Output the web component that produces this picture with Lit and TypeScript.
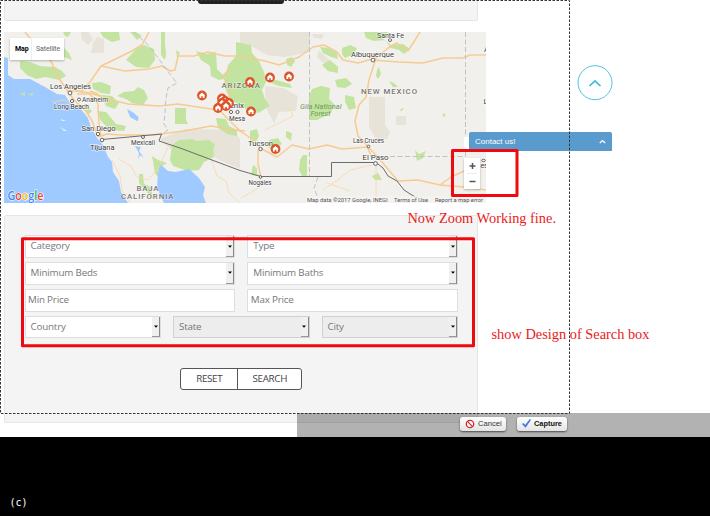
import { LitElement, html, svg, css } from "lit";
import { customElement, property } from "lit/decorators.js";

type Label = [text: string, x: number, y: number, width: number, kind: string];

const PARKS = [
  "M100 32H119L120 40 112 42 103 37Z",
  "M63 32H71L68 37 65 36Z M56 50L64 48 69 53 72 60 64 57Z",
  "M20 61L30 62 40 66 55 67 62 71 66 76 59 80 45 77 36 79 27 75 20 68Z",
  "M126 60L136 49 144 45 154 49 155 60 149 68 136 67Z",
  "M161 32H165V44L166 54 165 60 161 55Z",
  "M92 83L101 82 111 86 110 94 101 93 93 89Z M101 95L112 96 119 103 115 109 106 106Z",
  "M117 96L124 92 134 91 138 87 144 90 148 98 143 105 132 103 126 99Z",
  "M97 111L106 112 112 119 116 124 126 126 124 131 110 130 101 121Z",
  "M175 108H186V120L188 124H175Z",
  "M196 51L207 54 216 52 217 69 223 75 228 71 228 78 219 80 211 76 210 66 201 60Z",
  "M236 42L251 45 252 53 259 61 264 72 266 82 262 90 265 99 270 106 258 113 243 108 229 98 224 85 228 65 236 56Z",
  "M264 76L276 80 290 84 292 88 279 86 264 80Z",
  "M286 59L292 57 295 61 291 67 287 65Z",
  "M320 47L328 48 337 53 338 59 331 57 323 53Z M342 48L350 45 357 48 354 54 345 58 342 54Z M322 65L330 60 338 67 338 73 328 71Z",
  "M364 32H389L382 38 391 45 403 44 410 49 404 54 399 50 391 48 385 40 374 41 366 38Z",
  "M312 89L321 86 330 88 329 99 335 105 330 114 317 120 309 120 309 96Z M335 80L346 78 352 84 345 88 337 87Z M345 95L354 97 356 108 349 110 345 102Z M377 70L379 67 381 74 378 79 376 76Z",
  "M389 81L394 83 398 87 393 87Z M399 110L404 108 402 111Z M442 115L445 113 445 117Z",
  "M172 145L179 140 191 139 197 141 210 140 213 145 214 157 204 162 199 170 188 171 173 166 170 160Z",
  "M152 156L158 160 167 163 162 166 158 171 160 180 155 173Z M139 174L143 174 144 184 151 187 153 199 148 193 139 183Z",
  "M216 118L226 119 229 126 237 130 237 136 227 134 218 128Z M209 141L215 144 213 150 208 147Z",
  "M303 155H307V176H302L299 170 300 160Z M250 131L257 129 259 136 255 144 250 142Z M269 140L278 138 282 144 273 150 268 147Z M286 131L292 133 291 141 286 137Z M253 165L257 168 257 176 251 175Z",
  "M372 176L378 173 382 180 375 180Z M415 150L419 154 426 151 423 158 417 161Z M176 50L180 53 177 57Z",
  "M130 32H136L142 36 137 40Z M80 106L87 107 92 111 89 114Z",
];

const DESERT = [
  "M81 32H89L93 40 88 45 82 40Z M97 37L104 39 104 53H91L93 43Z",
  "M240 32H310V52L285 57 267 55 253 47 240 44Z",
  "M265 86L283 88 298 96 296 111 279 112 274 123 266 108Z",
  "M369 97H385V125L390 132 387 139H376L369 127Z M396 116H406V125H396Z",
  "M162 138L185 129 233 130 240 139 240 169 215 158 203 142 178 143 172 150 161 141Z",
  "M312 34H324L322 39 314 38Z M319 50L330 61 336 70 326 65 317 57Z",
];

const ROADS = [
  "M25 32L30 38 38 44 45 53 52 63 56 74 67 90 74 100 86 111 92 121 98 137",
  "M68 91L82 91 90 82 101 66 130 52 142 45 149 32",
  "M101 66L125 71 149 69 162 66 170 71 175 70 178 56 194 56 208 52 225 56 240 56 265 61 279 65 299 57 313 47 324 45 337 52 343 60 358 63 376 58 388 48 397 43 408 51 420 32",
  "M67 90L90 93 108 99 128 104 160 106 178 104 211 109 220 111 230 121 240 131 252 139 260 148 277 157 292 145 309 149 327 145 342 149 368 147 377 156 398 181 418 180 440 185 464 187 486 190",
  "M98 137L107 134 121 135 153 135 184 131 211 126 235 130 245 131",
  "M77 94L90 94 98 104 99 124 101 136",
  "M90 91L98 94 110 104",
  "M376 58L369 80 366 97 359 105 355 121 358 136 366 144 372 158",
  "M373 60L398 62 423 63 443 58 463 58 470 55 486 55",
  "M258 150L258 164 261 177",
  "M440 185L451 177 464 171 486 165",
  "M230 68L223 76 230 91 229 107",
];

const MINOR_ROADS = [
  "M211 159L217 176 226 181 229 193 240 203", "M261 177L257 189 241 198",
  "M372 165L350 170 339 179 323 190", "M376 165L376 203", "M119 159L131 166 137 177 148 180 160 166 168 147",
  "M112 160L120 176 122 190 130 203", "M265 130L293 116 289 107", "M327 183L350 191", "M52 102L65 100 74 108",
];

const MARKERS: [number, number][] = [
  [202, 95.5], [250, 82], [270, 77.5], [289, 76.5], [251, 111.5], [275.5, 149],
  [222, 98.5], [225, 101], [229, 103], [222, 103], [218, 108], [226, 106],
];

const TOWNS: [number, number, number][] = [
  [70, 93, 1.9], [72, 101, 1.6], [79, 99.5, 1.5], [98, 134, 1.7], [102, 140, 1.8], [143, 137, 1.5],
  [231, 112, 1.6], [237.5, 112, 1.6], [260.5, 149, 1.7], [260.5, 177, 1.3], [390, 40, 1.5],
  [373, 60, 1.9], [368.5, 146.5, 1.3], [375.5, 163.5, 1.9],
];

const LABELS: Label[] = [
  ["Los Angeles", 50, 89, 41, "city"],
  ["Anaheim", 82, 102, 26, "town"],
  ["Long Beach", 54, 109, 35, "town"],
  ["San Diego", 81.5, 131, 34, "town"],
  ["Tijuana", 90, 149.5, 24.5, "city"],
  ["Mexicali", 131, 145, 24, "small"],
  ["Phoenix", 216, 108, 28, "town"],
  ["Mesa", 229, 121, 16, "town"],
  ["Tucson", 248, 145.5, 25, "city"],
  ["Nogales", 248.5, 185, 23, "small"],
  ["Santa Fe", 377, 37.5, 27, "town"],
  ["Albuquerque", 351, 56.5, 43, "city"],
  ["Las Cruces", 353, 143, 31, "small"],
  ["El Paso", 362.5, 159.5, 26, "city"],
  ["ARIZONA", 221.5, 88, 38.5, "region"],
  ["NEW MEXICO", 361, 94, 56, "region"],
  ["BAJA", 136.5, 190.5, 22, "region"],
  ["CALIFORNIA", 121, 198.5, 52.5, "region"],
  ["Gila National", 300, 109, 41.5, "forest"],
  ["Forest", 310.5, 116, 20, "forest"],
];

@customElement("region-map")
class RegionMap extends LitElement {
  static styles = css`
    :host { display: block; position: relative; width: 482px; height: 171px; font-family: Roboto, sans-serif; }
    .canvas { display: block; width: 482px; height: 171px; }
    .land { fill: #f2f0ec; }
    .sea { fill: #9fcaff; }
    .park { fill: #c3e4a0; }
    .desert { fill: #e2ddd2; opacity: .7; }
    .road { fill: none; stroke: #f6cb92; stroke-width: 1.5; stroke-linejoin: round; }
    .minor { fill: none; stroke: #f6d7aa; stroke-width: .8; }
    .border { fill: none; stroke: #6c6c6c; stroke-width: 1; }
    .state { fill: none; stroke: #c2c2c2; stroke-width: 1; stroke-dasharray: 5 2.5; }
    .place { fill: #fff; stroke: #555; stroke-width: .9; }
    .city, .town, .small { fill: #3c3c3c; stroke: #fff; stroke-width: 1.4; stroke-opacity: .7; paint-order: stroke; }
    .city { font-size: 8px; }
    .town { font-size: 7.4px; }
    .small { font-size: 6.7px; }
    .region { font-size: 7.8px; fill: #777; font-weight: 500; stroke: #fff; stroke-width: 1; stroke-opacity: .6; paint-order: stroke; }
    .forest { font-size: 7.2px; fill: #6d9b58; font-style: italic; }
    .legal-band { fill: #f5f5f5; opacity: .65; }
    .legal { font-size: 6.2px; fill: #555; }
    .pin { fill: #dc5529; }
    .house { fill: #fff; }
    .logo { font-family: "Open Sans", sans-serif; font-size: 11.800px; font-weight: 600; stroke: #fff; stroke-width: 1.2; paint-order: stroke; }
    .blue { fill: #4285f4; } .red { fill: #ea4335; } .yellow { fill: #fbbc05; } .green { fill: #34a853; }
    .types { position: absolute; left: 6px; top: 6px; display: flex; height: 22px; width: 54px; background: #fff; box-shadow: 0 1px 2px #0004; font-size: 7px; letter-spacing: -.1px; line-height: 22px; }
    .type { padding-left: 4px; color: #666; }
    .type.on { box-sizing: border-box; width: 22px; color: #000; font-weight: 700; border-right: 1px solid #eee; padding-left: 5px; }
    .zoom { position: absolute; left: 460px; top: 126px; width: 16px; height: 31px; background: #fff; box-shadow: 0 1px 2px #0004; }
    .zoom svg { display: block; }
    .pegman { position: absolute; left: 460px; top: 105px; width: 16px; height: 13px; background: #fff; }
  `;

  render() {
    return html`
      <svg class="canvas" viewBox="4 32 482 171">
        <rect class="land" x="4" y="32" width="482" height="171"/>
        ${DESERT.map((d) => svg`<path class="desert" d=${d}/>`)}
        ${PARKS.map((d) => svg`<path class="park" d=${d}/>`)}
        <path class="sea" d="M4 57L8 58 8 75 14 79 30 79 45 87 57 94 65 95 70 103 80 108 88 118 91 127 97 138 103 145 108 157 112 162 113 172 119 181 121 192 128 203H4Z"/>
        <path class="sea" d="M160 164L168 171 176 172 189 169 199 178 205 187 203 195 206 203H164L157 188 158 173Z"/>
        <path class="sea" d="M127 109L134 113 139 118 137 121 130 117ZM133 115L138 116 138 121 134 118ZM135 146L141 147 139 151 144 158 140 155 138 160 139 153Z"/>
        <path class="park" d="M20 94L25 92 25 96ZM28 94L34 93 32 96Z"/>
        <path class="land" d="M60 127L67 131 64 131ZM61 119L66 121 62 121Z"/>
        ${MINOR_ROADS.map((d) => svg`<path class="minor" d=${d}/>`)}
        ${ROADS.map((d) => svg`<path class="road" d=${d}/>`)}
        <path class="state" d="M134 32L149 46 161 62 169 73 177 83 168 88 166 98 165 112 164 124 168 130 161 135"/>
        <path class="state" d="M309.5 32V176M465.5 32V156.5H385M318 177L314 188 317 196"/>
        <path class="border" d="M102 139.500L161.500 134 159 141 180 148 240 170.500 261 176.500H331.500V162.500H376L383 168 388 176 397 181 404 190 415 197"/>
        ${TOWNS.map(([x, y, r]) => svg`<circle class="place" cx=${x} cy=${y} r=${r}/>`)}
        ${LABELS.map(([t, x, y, w, k]) => svg`<text class=${k} x=${x} y=${y} textLength=${w} lengthAdjust=${k === "region" ? "spacing" : "spacingAndGlyphs"}>${t}</text>`)}
        <ellipse class="place" cx="483.500" cy="160.500" rx="1.700" ry="1.200"/>
        <text class="small" x="480.500" y="168">es</text>
        <text class="town" x="483.500" y="104">L</text>
        <text class="town" x="484" y="52">A</text>
        ${MARKERS.map(([x, y]) => svg`
          <circle class="pin" cx=${x} cy=${y} r="4.900"/>
          <path class="house" transform="translate(${x} ${y})" d="M0-3L3-.2 2.500.500V2.600H.8V.8H-.8V2.600H-2.500V.5L-3-.2Z"/>`)}
        <rect class="legal-band" x="306" y="196" width="180" height="7"/>
        <text class="legal" x="307" y="202" textLength="80.500" lengthAdjust="spacingAndGlyphs">Map data ©2017 Google, INEGI</text>
        <text class="legal" x="394" y="202" textLength="34" lengthAdjust="spacingAndGlyphs">Terms of Use</text>
        <text class="legal" x="435" y="202" textLength="48" lengthAdjust="spacingAndGlyphs">Report a map error</text>
        <text class="logo" x="7.500" y="199.500" textLength="36" lengthAdjust="spacingAndGlyphs"><tspan class="blue">G</tspan><tspan class="red">o</tspan><tspan class="yellow">o</tspan><tspan class="blue">g</tspan><tspan class="green">l</tspan><tspan class="red">e</tspan></text>
      </svg>
      <div class="types"><span class="type on">Map</span><span class="type">Satellite</span></div>
      <div class="pegman"></div>
      <div class="zoom">
        <svg width="16" height="31" viewBox="0 0 16 31">
          <path d="M5.500 8H11.500M8.500 5V11M5.500 23.500H11.500" stroke="#555" stroke-width="1.500"/>
          <path d="M3 15.500H13" stroke="#e6e6e6" stroke-width=".8"/>
        </svg>
      </div>`;
  }
}

@customElement("select-field")
class SelectField extends LitElement {
  @property() label = "";
  @property({ type: Boolean, reflect: true }) disabled = false;
  @property({ type: Boolean, reflect: true }) plain = false;

  static styles = css`
    :host { display: flex; box-sizing: border-box; flex: 1; height: 22.8px; background: #fff; border: 1px solid #dedede; color: #777; font: 9.8px/20px "Open Sans", sans-serif; letter-spacing: -.18px; }
    :host([disabled]) { background: #ededed; border-color: #d0d0d0; }
    .label { flex: 1; padding-left: 5px; }
    :host([plain]) .label { padding-left: 2.500px; }
    .arrow { box-sizing: border-box; width: 8px; background: #f0f0f0; border-right: 1.500px solid #888; border-bottom: 1px solid #999; display: flex; align-items: center; justify-content: center; }
    .arrow svg { display: block; }
  `;

  render() {
    return html`<span class="label">${this.label}</span>
      ${this.plain ? "" : html`<span class="arrow"><svg width="4" height="3" viewBox="0 0 4 3"><path d="M0 .500H4L2 2.700Z" fill="#000"/></svg></span>`}`;
  }
}

@customElement("app-root")
class AppRoot extends LitElement {
  static styles = css`
    :host { display: flex; flex-direction: column; position: relative; width: 710px; height: 516px; overflow: hidden; background: #000; font-family: "Open Sans", sans-serif; }
    .page { height: 437px; background: #fff; display: flex; flex-direction: column; padding-left: 4px; box-sizing: border-box; }
    .panel { box-sizing: border-box; width: 474px; background: #f4f4f4; border: 1px solid #e6e6e6; border-radius: 2px; }
    .top { height: 21px; border-top: 0; margin-bottom: 11px; flex: none; }
    region-map { flex: none; margin-bottom: 12px; }
    .search { height: 208px; flex: none; padding: 19.300px 19px 0 19.500px; display: flex; flex-direction: column; }
    .rows { display: flex; flex-direction: column; gap: 4px; }
    .row { display: flex; gap: 12px; }
    .actions { display: flex; align-self: center; margin: 30px 0 0 0; box-sizing: border-box; width: 122px; height: 22px; border: 1px solid #555; border-radius: 3px; background: #fff; color: #444; font-size: 9.800px; letter-spacing: -.3px; line-height: 20.500px; text-align: center; }
    .reset { width: 56px; border-right: 1px solid #555; }
    .find { flex: 1; }
    .footer { flex: 1; display: flex; align-items: flex-end; padding: 0 0 5px 9.500px; box-sizing: border-box; color: #fff; }
    .mark { font: 10px/16px "DejaVu Sans Mono", monospace; }
    .tab { position: absolute; left: 198px; top: -4px; width: 86px; height: 8px; border-radius: 3px; background: #222; }
    .chat { position: absolute; left: 469px; top: 132px; width: 143px; height: 19px; box-sizing: border-box; padding: 0 6px; display: flex; align-items: center; justify-content: space-between; border-radius: 2px 2px 0 0; background: #5a9bce; color: #fff; font: 8px "Liberation Sans", sans-serif; }
    .up { position: absolute; left: 577px; top: 65px; }
    .shade { position: absolute; left: 297px; top: 413px; width: 413px; height: 24px; box-sizing: border-box; padding: 3.500px 0 0 163px; display: flex; gap: 11px; background: #0000004d; }
    .tool { box-sizing: border-box; width: 46px; height: 14px; display: flex; align-items: center; gap: 3px; padding-left: 5px; border-radius: 3px; background: linear-gradient(#fff, #e4e4e4); box-shadow: 0 1px 2px #0009; color: #333; font: 7.600px "Liberation Sans", sans-serif; white-space: nowrap; }
    .tool.primary { width: 50px; font-weight: 700; font-size: 7.400px; color: #111; }
    .tool svg { flex: none; }
    .overlay { position: absolute; left: 0; top: 0; }
    .crop { fill: none; stroke: #333; stroke-width: 1; stroke-dasharray: 2.500 1.500; }
    .box { fill: none; stroke: #ee0a0e; stroke-width: 3; stroke-linejoin: round; }
    .note { font: 15.200px "Liberation Serif", serif; fill: #e81c1c; }
  `;

  render() {
    return html`
      <div class="page">
        <div class="panel top"></div>
        <region-map></region-map>
        <div class="panel search">
          <div class="rows">
            <div class="row"><select-field label="Category"></select-field><select-field label="Type"></select-field></div>
            <div class="row"><select-field label="Minimum Beds"></select-field><select-field label="Minimum Baths"></select-field></div>
            <div class="row"><select-field plain label="Min Price"></select-field><select-field plain label="Max Price"></select-field></div>
            <div class="row"><select-field label="Country"></select-field><select-field disabled label="State"></select-field><select-field disabled label="City"></select-field></div>
          </div>
          <div class="actions"><span class="reset">RESET</span><span class="find">SEARCH</span></div>
        </div>
      </div>
      <div class="footer"><span class="mark">(c)</span></div>
      <div class="tab"></div>
      <div class="chat"><span>Contact us!</span><svg width="7" height="5" viewBox="0 0 7 5"><path d="M.8 4L3.500 1.500 6.200 4" fill="none" stroke="#fff" stroke-width="1.200"/></svg></div>
      <svg class="up" width="36" height="36" viewBox="0 0 36 36">
        <circle cx="18" cy="17.700" r="17" fill="#fff" stroke="#4fc4dc" stroke-width="1"/>
        <path d="M12.500 21L18 15.800 23.500 21" fill="none" stroke="#38bcdc" stroke-width="1.700"/>
      </svg>
      <div class="shade">
        <div class="tool"><svg width="10" height="10" viewBox="0 0 10 10"><circle cx="5" cy="5" r="3.700" fill="#fff" stroke="#d02a2e" stroke-width="1.300"/><path d="M2.400 2.400L7.600 7.600" stroke="#d02a2e" stroke-width="1.300"/></svg>Cancel</div>
        <div class="tool primary"><svg width="9" height="9" viewBox="0 0 9 9"><path d="M0 5L1.500 4 3.200 6 7.800 0 9 .8 3.600 8.800Z" fill="#3f78dc"/></svg>Capture</div>
      </div>
      <svg class="overlay" width="710" height="437" viewBox="0 0 710 437">
        <rect class="crop" x=".5" y=".5" width="569" height="413"/>
        <rect class="box" x="452.500" y="150.500" width="64.500" height="45"/>
        <rect class="box" x="22.500" y="238.700" width="451" height="107"/>
        <text class="note" x="407.500" y="223" textLength="148.500" lengthAdjust="spacingAndGlyphs">Now Zoom Working fine.</text>
        <text class="note" x="491.500" y="339" textLength="158" lengthAdjust="spacingAndGlyphs">show Design of Search box</text>
      </svg>`;
  }
}
